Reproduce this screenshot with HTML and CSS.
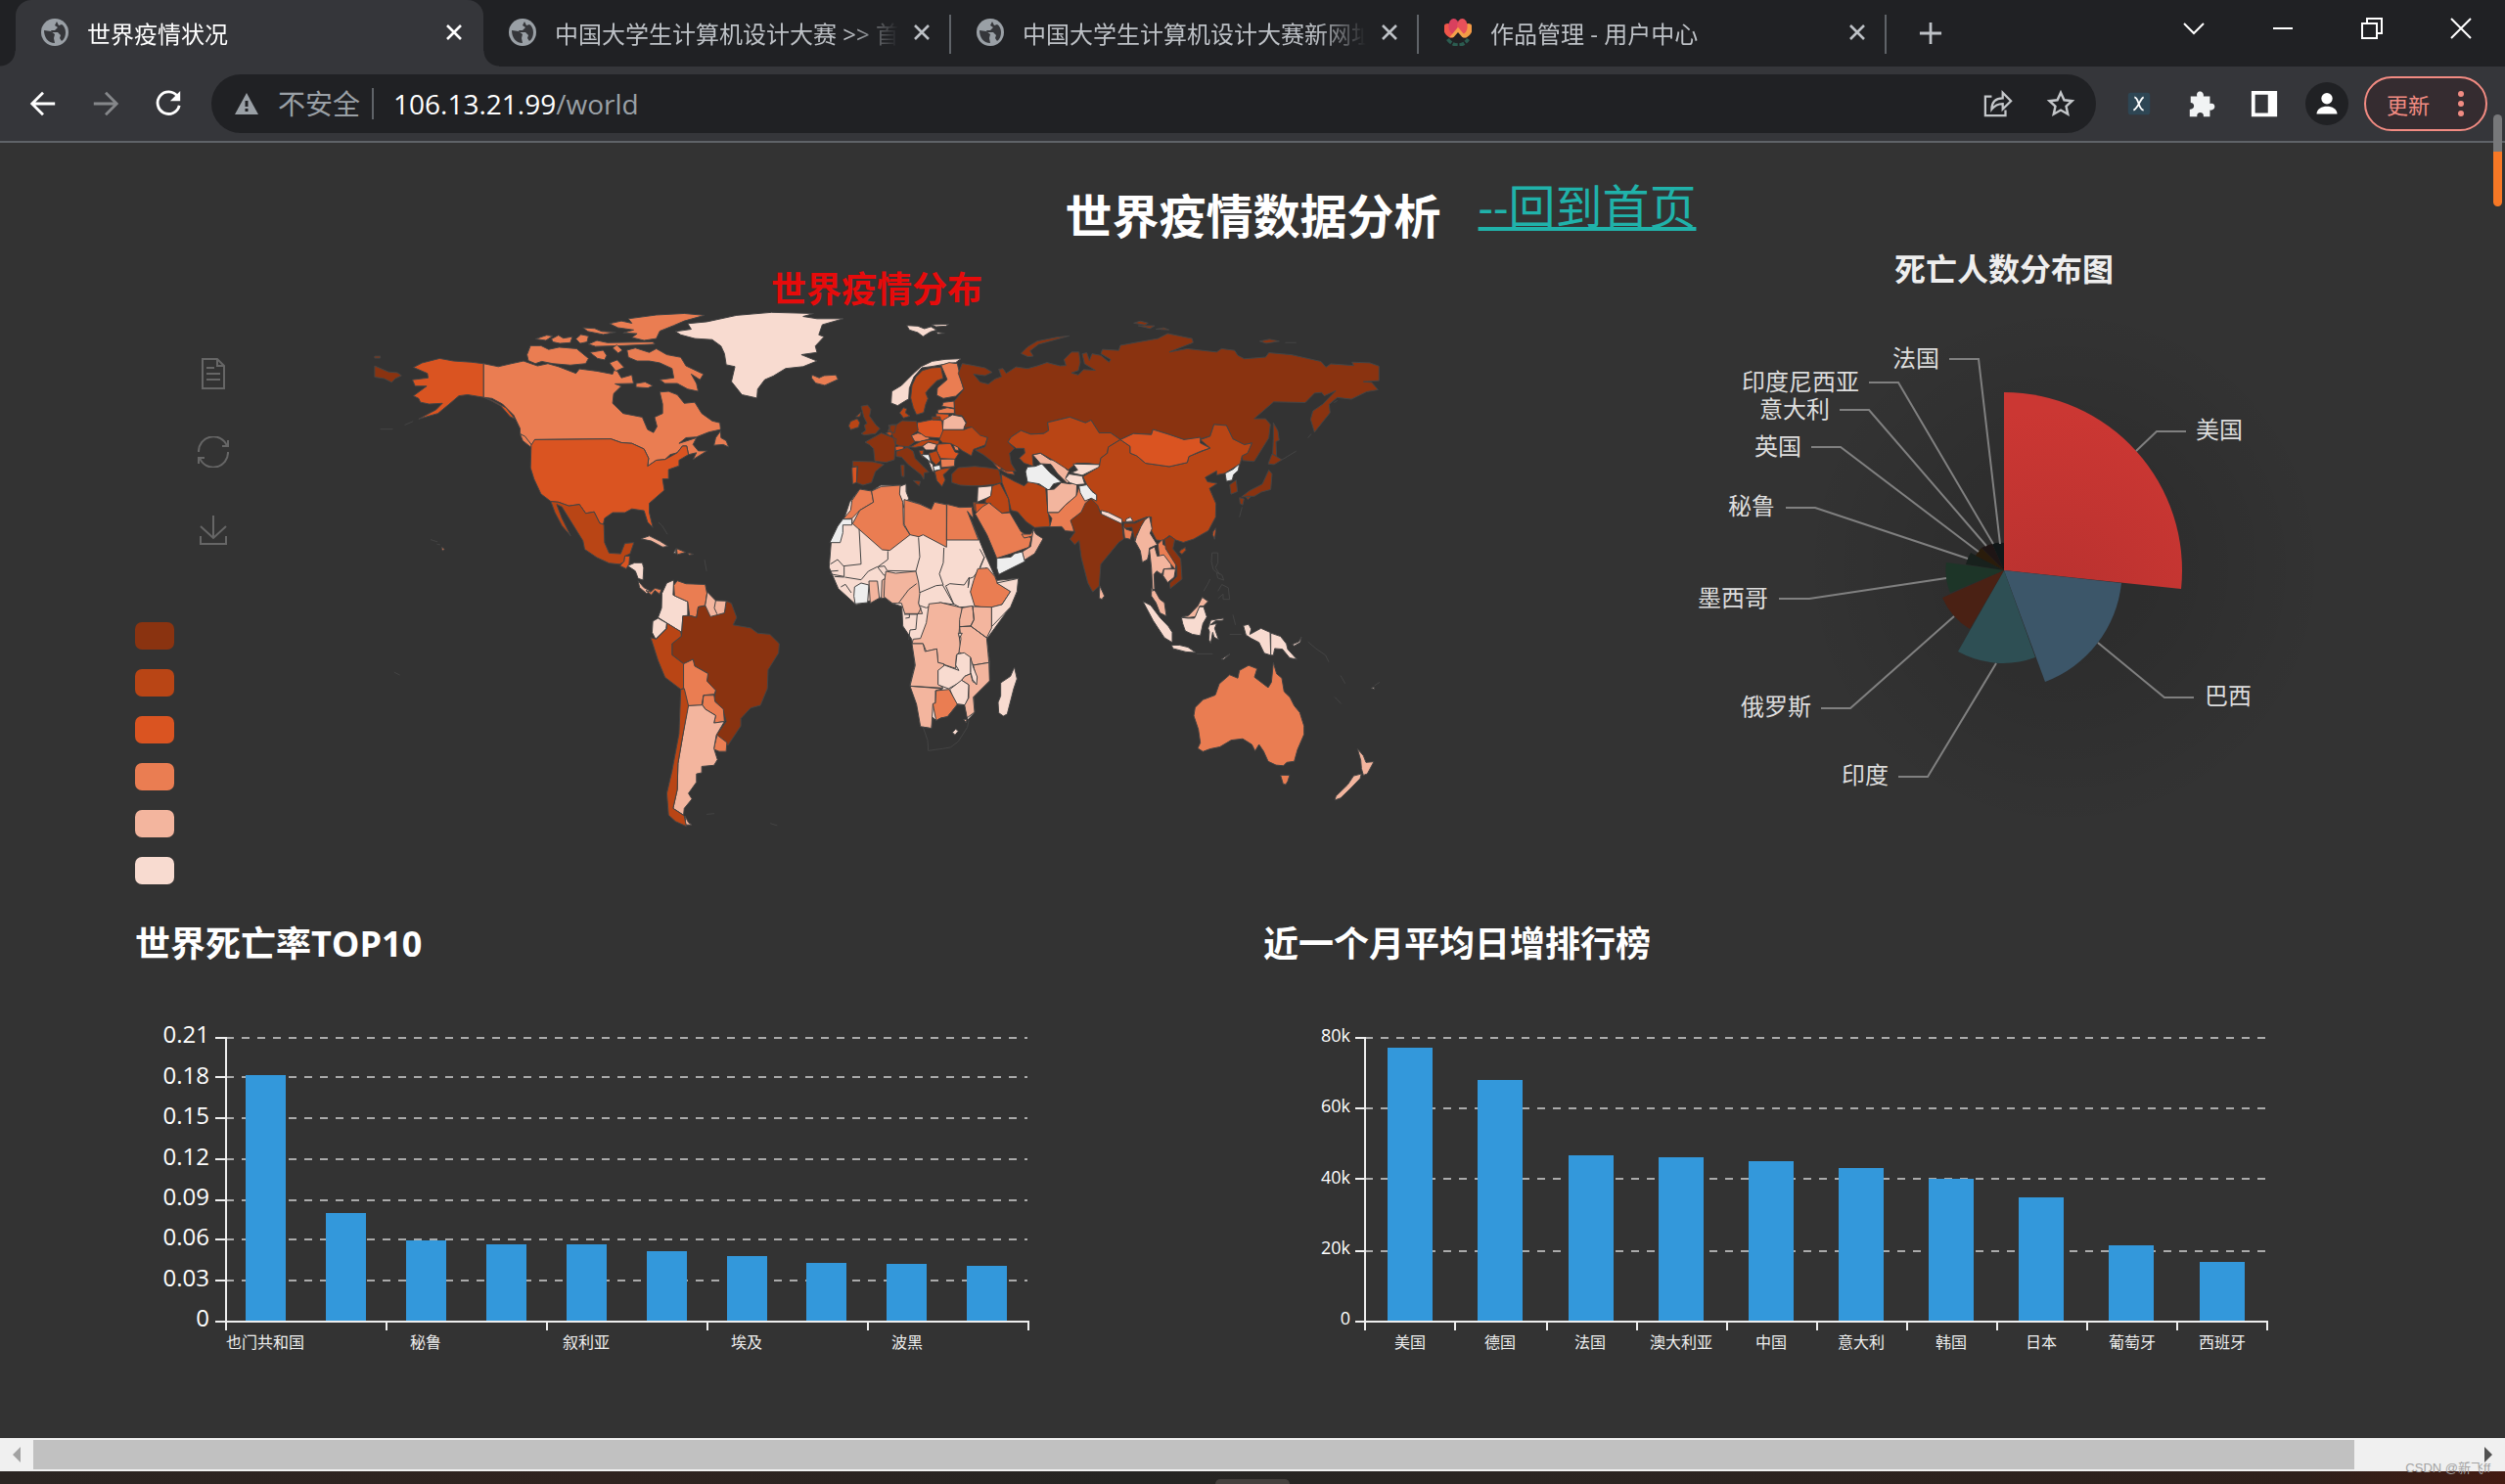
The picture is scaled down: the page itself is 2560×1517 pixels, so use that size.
FILE: index.html
```html
<!DOCTYPE html>
<html lang="zh-CN">
<head>
<meta charset="utf-8">
<title>世界疫情状况</title>
<link rel="stylesheet" href="styles.css">
</head>
<body>
<svg class="defs" aria-hidden="true">
  <symbol id="globe" viewBox="0 0 28 28"><circle cx="14" cy="14" r="14" fill="#9aa0a6"/><path d="M3 12l7 1 4 3-1 4 1 5C7 25 3 19 3 12zM16 3l-2 4 3 2-3 3h-4l1 2 6 0 3 3-1 3 2 3c3-2 4-6 4-9 0-4-2-7-4-8l-3 1z" fill="#35363a"/></symbol>
  <symbol id="cross" viewBox="0 0 24 24"><path d="M5 5l14 14M19 5L5 19" stroke="currentColor" stroke-width="2.6" fill="none"/></symbol>
</svg>

<div class="tabs">
  <div class="tab active">
    <svg class="fav"><use href="#globe"/></svg><span class="name">世界疫情状况</span>
    <button class="x" aria-label="关闭"><svg><use href="#cross"/></svg></button>
  </div>
  <div class="tab">
    <svg class="fav"><use href="#globe"/></svg><span class="name">中国大学生计算机设计大赛 &gt;&gt; 首页</span>
    <button class="x" aria-label="关闭"><svg><use href="#cross"/></svg></button>
  </div>
  <div class="tab">
    <svg class="fav"><use href="#globe"/></svg><span class="name">中国大学生计算机设计大赛新网址</span>
    <button class="x" aria-label="关闭"><svg><use href="#cross"/></svg></button>
  </div>
  <div class="tab">
    <svg class="fav" viewBox="0 0 32 32"><ellipse cx="6" cy="14" rx="6" ry="9" fill="#f0554a" transform="rotate(-30 6 14)"/><ellipse cx="26" cy="14" rx="6" ry="9" fill="#f49a45" transform="rotate(30 26 14)"/><ellipse cx="11" cy="9" rx="6" ry="9" fill="#d9405e"/><ellipse cx="21" cy="9" rx="6" ry="9" fill="#e8505a"/><path d="M6 22l10-12 10 12" fill="#f4a04a"/><path d="M4 24q5 7 12 7t12-7" fill="none" stroke="#2b5c50" stroke-width="4" stroke-dasharray="6 2"/><path d="M9 24l7-8 7 8z" fill="#241f22"/></svg><span class="name">作品管理 - 用户中心</span>
    <button class="x" aria-label="关闭"><svg><use href="#cross"/></svg></button>
  </div>
  <button class="plus" aria-label="新标签页"><svg viewBox="0 0 26 26"><path d="M13 1v24M1 13h24" stroke="#bdc1c6" stroke-width="3"/></svg></button>
  <div class="win">
    <button aria-label="搜索标签页"><svg viewBox="0 0 24 24"><path d="M2 7l10 10L22 7"/></svg></button>
    <button aria-label="最小化"><svg viewBox="0 0 24 24"><path d="M2 12h20"/></svg></button>
    <button aria-label="还原"><svg viewBox="0 0 24 24"><path d="M2 7h15v15H2zM7 7V2h15v15h-5"/></svg></button>
    <button aria-label="关闭窗口"><svg viewBox="0 0 24 24"><path d="M2 2l20 20M22 2L2 22"/></svg></button>
  </div>
</div>

<div class="bar">
  <button aria-label="后退"><svg viewBox="0 0 32 32" stroke="#fff"><path d="M29 16H5M16 4L4 16l12 12"/></svg></button>
  <button aria-label="前进"><svg viewBox="0 0 32 32" stroke="#85878a"><path d="M3 16h24M16 4l12 12-12 12"/></svg></button>
  <button aria-label="刷新"><svg viewBox="0 0 32 32" stroke="#fff"><path d="M26 8A12 12 0 1 0 28 18"/><path d="M29 2v11H18z" fill="#fff" stroke="none"/></svg></button>
  <div class="omni">
    <svg class="warn" viewBox="0 0 24 22"><path d="M12 0l12 22H0z" fill="#9aa0a6"/><path d="M12 8v6M12 16v3" stroke="#202124" stroke-width="3"/></svg>
    <span class="unsafe">不安全</span>
    <span class="url"><b>106.13.21.99</b>/world</span>
    <button aria-label="分享"><svg viewBox="0 0 32 32" stroke="#c4c7ca"><path d="M9 8H2v21h22v-6M9 22c0-8 4-12 12-12V4l9 9-9 9v-6c-6 0-9 2-12 6z" stroke-width="2.4"/></svg></button>
    <button aria-label="收藏"><svg viewBox="0 0 32 32" stroke="#c4c7ca"><path d="M16 4l3.700 8 8.600 1-6.400 5.800 1.800 8.600L16 23l-7.700 4.400 1.800-8.600L3.700 13l8.600-1z" stroke-width="2.600"/></svg></button>
  </div>
  <div class="ext">
    <button aria-label="扩展 X"><svg viewBox="0 0 32 32"><rect x="4" y="4" width="24" height="24" rx="3" fill="#2e4654"/><path d="M11 9c5 0 4 14 10 14M21 9c-4 2-6 12-11 14" stroke="#fff" stroke-width="2"/></svg></button>
    <button aria-label="扩展程序"><svg viewBox="0 0 32 32"><path d="M4 8h7c-2-7 8-7 7 0h7v8c7-2 7 8 0 7v7h-7c1-6-8-6-7 0H3v-8c6 1 6-7 1-7z" fill="#f1f3f4"/></svg></button>
    <button aria-label="侧边栏"><svg viewBox="0 0 32 32"><path d="M2 2h28v28H2zM6 6v20h14V6z" fill="#fff" fill-rule="evenodd"/></svg></button>
    <button class="me" aria-label="用户"><svg viewBox="0 0 32 32"><circle cx="16" cy="10" r="6.500" fill="#fff"/><path d="M4 28c0-12 24-12 24 0z" fill="#fff"/></svg></button>
    <button class="update">更新<svg viewBox="0 0 8 28"><circle cx="4" cy="4" r="3"/><circle cx="4" cy="14" r="3"/><circle cx="4" cy="24" r="3"/></svg></button>
  </div>
</div>
<div class="thumb-v"></div>

<main>
  <header class="head"><h1>世界疫情数据分析</h1><a href="/">--回到首页</a></header>

  <section class="top">
    <aside>
      <div class="tools">
        <button aria-label="数据视图"><svg viewBox="0 0 32 32"><path d="M5 1h15l7 7v23H5zM20 1v7h7M9 10h8M9 16h14M9 22h14"/></svg></button>
        <button aria-label="还原"><svg viewBox="0 0 32 32"><path d="M1 16A15 15 0 0 1 30 10M31 4v6h-6M31 16A15 15 0 0 1 2 22M1 28v-6h6"/></svg></button>
        <button aria-label="保存为图片"><svg viewBox="0 0 32 32"><path d="M16 1v23M3 12l13 12 13-12M3 22v8h26v-8"/></svg></button>
      </div>
      <ul class="legend"><li class="s1"></li><li class="s2"></li><li class="s3"></li><li class="s4"></li><li class="s5"></li><li class="s6"></li></ul>
    </aside>

    <div class="map">
      <h2>世界疫情分布</h2>
      <svg viewBox="372 314 1048 536" role="img" aria-label="世界疫情分布">
        <!-- Americas -->
        <g transform="translate(360 260) scale(.35714 .38265)">
          <path class="c1" d="M64 298l20 8 20 8 25 2 12 8-18 8-10 10-22-10-27-4zM64 272h16v5h-16z"/>
          <path class="c3" d="M376 292L340 288 290 285 250 278 200 290 175 302 215 318 217 330 172 335 180 352 213 352 175 378 190 385 195 395 220 400 258 398 240 415 190 440 245 425 275 402 305 378 330 375 376 382 400 390 440 410 466 440 452 434 425 405 395 390 376 382z"/>
          <path class="c4" d="M376 292L418 300 455 292 490 285 530 298 560 292 590 300 640 318 650 306 700 312 745 320 752 302 770 330 800 322 805 345 752 346 770 352 748 372 745 398 775 425 830 435 845 468 862 476 872 460 865 435 888 425 888 400 880 368 905 366 930 375 950 398 980 395 1000 425 1030 445 1052 450 1054 468 1020 475 985 488 955 490 935 505 985 490 975 508 990 525 1015 525 975 548 985 530 962 535 957 512 945 512 930 530 910 535 895 548 870 550 845 566 848 545 835 520 800 505 770 503 740 493 522 495 522 515 500 500 480 478 480 465 462 430 430 400 400 385 376 382z"/>
          <path class="c4" d="M1035 510L1040 490 1054 472 1055 490 1070 498 1077 515 1062 508zM480 480l14 6 20 24-2 6-24-18zM500 268l10-24 30 0 22 10 30-6 50 4 34 26-8 14-44 4-50-4-32-6-18 6-20-8zM680 262l38-6 10 14-6 12-20-4zM736 290l22-8 20 20-24 10zM524 226l32-10 18 2-20 12zM570 226l20-10 14 8 26-4-6 16-30 2-20-4zM640 226l14-12 22 4-4 16-20 4zM676 240l24-10 30 6 130-2 6 6-90 4-80 2zM660 196l34 2 20 8 40 2-36 6-44-8z"/>
          <path class="c4" d="M736 185L770 178 800 184 790 172 870 162 950 158 1008 163 950 178 920 190 880 205 870 225 835 230 800 222 815 212 775 210 805 202 760 196z"/>
          <path class="c4" d="M786 256L810 250 850 262 870 252 900 268 940 275 955 298 1005 320 995 335 970 320 985 345 990 366 960 360 930 345 895 345 880 335 920 330 915 305 880 290 850 285 815 285 790 275zM812 345l26-4 22 10-14 6-34-2zM745 250l12-8 16 14-12 8z"/>
          <path class="c3" d="M522 495L740 493 770 503 800 505 835 520 848 545 845 566 870 550 895 548 930 530 945 512 957 512 962 535 935 550 935 565 905 575 905 600 888 600 893 630 850 665 850 690 860 730 845 715 835 685 800 680 780 690 745 690 722 705 718 722 708 718 692 688 668 692 650 668 620 672 590 662 568 660 540 640 520 600 510 570 512 510z"/>
          <path class="c2" d="M568 660L590 662 620 672 650 668 668 692 692 688 708 718 720 722 722 770 735 798 768 800 780 772 806 770 795 800 780 806 778 822 765 828 735 825 700 810 665 788 660 765 630 720 600 675 585 668 600 705 625 752 600 725 580 690z"/>
          <path class="c3" d="M780 806h14l-2 22-8 12-18-8 12-12z"/><path class="c5" d="M826 760l24-8 30 14 24 14-16 2-32-16zM818 872l16 18 20 10-12 6-20-16z"/><path class="c4" d="M928 786l26 10-24 6zM840 898l14 4 12-10 18 4-4 12-14-10-10 12zM960 798l16 3-12 2zM256 782l8 6-6 4zM1316 322l20 8 14-6 34-2 6 12-38 16-26-6-12-14z"/>
          <path class="c6" d="M788 832l20-8h22l4 14-2 32-14-4-8-20zM926 786v14l-6-2z"/>
          <path class="c6" d="M886 906L900 878 920 870 918 910 960 928 960 965 946 966 942 1020 940 1008 900 985 875 970 885 945zM860 980L875 972 900 985 898 1000 868 1028 858 1010z"/>
          <path class="c4" d="M920 884L930 872 955 880 1010 882 1015 905 1010 938 990 942 985 970 965 965 960 928 922 912z"/>
          <path class="c1" d="M946 966L965 965 985 970 990 942 1015 938 1025 965 1065 958 1070 926 1085 932 1100 970 1090 990 1140 998 1160 1012 1195 1015 1222 1040 1220 1065 1190 1110 1188 1160 1168 1205 1140 1212 1112 1240 1112 1260 1075 1312 1042 1284 1070 1248 1060 1215 1035 1190 1040 1165 1015 1140 1018 1120 980 1100 975 1082 948 1094 915 1070 915 1040 942 1020z"/>
          <path class="c5" d="M1016 902L1040 925 1070 926 1065 958 1025 968 1010 938z"/><path class="line" d="M1040 925l-4 20 8 16"/>
          <path class="c2" d="M854 1024L870 1028 900 1000 900 985 940 1008 942 1020 915 1040 915 1070 948 1094 950 1160 940 1162 895 1130 875 1085z"/>
          <path class="c4" d="M948 1094L975 1082 980 1100 1018 1120 1015 1140 1040 1165 1035 1178 1005 1178 1000 1205 960 1206 948 1160zM1002 1204L1005 1178 1035 1175 1038 1195 1062 1215 1065 1248 1035 1252 1040 1232 1010 1215zM1044 1284l28 20-2 24-20 0-16-6z"/>
          <path class="c5" d="M960 1206L1002 1204 1010 1215 1040 1232 1035 1252 1065 1248 1042 1284 1035 1320 1045 1350 1035 1365 1000 1368 1000 1385 985 1388 985 1410 962 1440 972 1455 950 1480 948 1498 918 1480 930 1430 932 1360 945 1290zM952 1500l10 18 10 6h-18z"/>
          <path class="c2" d="M940 1162L950 1160 962 1206 945 1290 932 1360 930 1430 918 1480 950 1500 956 1528 925 1515 905 1498 900 1440 915 1380 935 1280z"/>
          <path class="c6" d="M925 206L970 200 960 185 1015 180 1100 163 1200 155 1320 158 1290 166 1330 172 1405 172 1345 188 1335 215 1350 220 1325 245 1330 262 1285 268 1330 285 1290 300 1240 305 1205 325 1180 335 1160 360 1158 384 1115 375 1085 340 1095 300 1070 295 1065 265 1055 245 1030 228 980 225 940 215z"/>
          <path class="isle" d="M80 467h36M150 456l24-10M224 762l20 6M242 774l10 2M1014 1496l22-2M1196 1520l20 6M876 716l10 8 16 24M1008 816l6 30M120 1116l16 8"/>
        </g>
        <!-- Europe and Africa -->
        <g transform="translate(820 300) scale(.33333)">
          <path class="c6" d="M176 600L212 606 240 588 300 588 318 590 320 632 360 645 395 662 405 640 445 648 480 656 520 655 524 690 506 668 540 750 560 800 596 880 662 874 655 920 620 985 565 1060 574 1130 572 1190 525 1235 528 1285 505 1310 496 1262 470 1262 410 1310 395 1333 370 1328 345 1240 330 1200 345 1140 335 1060 308 1020 305 960 275 950 250 930 165 955 110 905 82 840 88 765 125 700 145 640z"/>
          <path class="c6" d="M320 98l34 2 20 8 20-6 18 10-20 6-22 14-16-12-26-8zM396 96l54-2-10 6-30 2zM408 118l28 4-20 2z"/>
          <path class="c6" d="M274 300l30-18 20-20 16-16 24-22 34-16 40-6 48-2-16 12-40 6-34 6-30 4-24 28-14 34-2 34-8 4-26 16-20-8z"/>
          <path class="c2" d="M332 320L336 282 348 256 368 236 396 228 425 226 432 260 412 268 390 290 378 305 385 322 378 340 372 365 350 372 340 350zM298 366l12-16 10 4-4 12 14 10-20 6zM180 364l-4 14-12 0z"/>
          <path class="c4" d="M432 236L425 220 450 212 475 215 482 245 494 293 470 315 432 322 412 312 414 290 444 264z"/>
          <path class="c4" d="M432 334l34-4v22l-38-6zM414 358l30-8 22 4v14l-50 0zM334 436l20-8 30 6 6 12-24 8-24 0zM424 508l44-2-2 24-40 4zM460 458l16 4 4 20-12-2z"/>
          <path class="c3" d="M352 396l50-10 26 4 4 36-6 18-48-4-26-18zM410 368l38 2 4 14-20 8-22-12zM414 462l40-2 14 26 12 4-12 18-44-2-12-22zM152 534l16-4-2 50-12 4zM284 470l24-4 4 12-26 4z"/>
          <path class="c5" d="M430 418l2-30 28-16 30 6 12 20-8 20zM368 468l18-12h30l-12 24-26 0z"/>
          <path class="c2" d="M420 448L432 418 495 418 520 408 548 432 568 442 560 465 525 478 518 498 490 482 478 472 454 460 430 458zM148 392l20-8 8 12-4 14-24 8-6-12zM256 428l20-8 6 12-14 4zM308 478l28-10 30-16 26-4 28 4-4 12-30-8-18 12-22 4-26-2zM358 482l14-2-2 24-8-10zM388 490l24-8 12 30-14 14-14-14zM406 546l20-8 28-4-10 12-12 10 6 16-10 20-16-18z"/>
          <path class="c1" d="M180 346l20-4 10 14-4 20 20 28 12 10-14 16-34 4-10-4 14-10-4-16 8-6-10-20zM192 456l50-28 46 18-4 28-2 36-26 8-34-4-4-38-12-12zM154 514l62 2 34 8-26 22-12 34-26 8-20-8 4-50-16 2zM264 404L286 404 306 390 350 392 355 420 334 436 345 455 325 470 300 468 285 462 280 445zM262 422l10-20 16 0-6 26zM288 484l34-12 18 12 6 22 24 24 18 18-14 2-2 20-8-14-40-32-20-22-16-2zM302 526h10v36l-8-2zM340 574l22 2-4 14zM458 554l20-20 50-4 40 4 34 6 10 40-24 6-40 4-32 0-32-2-26-8zM692 194l-22-10 20-20 30-18 60-12 38-4-50 14-44 12-26 20 10 16zM396 378l26 0 2 8-24 2z"/>
          <path class="no" d="M364 494h24l6 24zM400 530l22-4 2 14-20 4z"/><path class="c6" d="M386 514l14 10 4 24-6-4zM298 592l20-8 0 24 8 20-14 30-8-26-8-18z"/>
          <path class="c4" d="M176 600L212 606 218 640 176 665 152 690 125 692 148 665 152 635z"/>
          <path class="c4" d="M212 606L242 592 300 588 298 615 308 640 310 710 330 740 268 788 245 786 154 706 176 665 218 640zM312 632L360 646 395 662 405 640 443 648 442 778 370 740 357 746 330 740 312 708zM442 646L482 656 520 655 524 690 506 668 540 756 442 756z"/>
          <path class="no" d="M124 692h28v18h-28l0 24-8 30-32 0 24-50z"/>
          <path class="line" d="M152 706l0-14M174 722l6 108-54 6M262 790v26l-30 22M356 748l4 60-12 44-88-2-8-14-20 2M434 780l-2 46-12 34 12 34M544 840l14-32M544 784l14 26-14 34-20 26-12 4-4 28 4-32-16 24-44-4-14 8M358 918l52-22 20-2 34 60-42-6-42 16-24-8v-38M130 870l50 8 22-26 28-14 20 26 14 0M86 830l22-14 20 22 0 30-44-8M98 868l30 2M118 900l14-8 18 26M86 852l24-2M440 898l24 54 18 10 40-2M562 840l24 34 22 26 30 16"/>
          <path class="no" d="M160 900l20-12 24 6-4 54-38 4-4-24z"/>
          <path class="c5" d="M204 882h26l6 52-28 16zM244 880l10-6 0 58-12 4z"/>
          <path class="c5" d="M256 852L286 858 348 852 356 885 360 920 356 950 368 982 314 982 304 950 276 950 250 930 252 880z"/><path class="line" d="M350 890l-24 18-30 40"/>
          <path class="line" d="M312 984h42l10-20M326 1062l4-30 18-2 4-46M316 996l12-2v-12"/>
          <path class="c4" d="M538 844L568 842 590 868 598 888 638 914 612 954 570 966 528 958 515 915 525 880z"/>
          <path class="c6" d="M596 888L662 874 658 914 638 962 580 1022 580 962 612 954 638 914z"/>
          <path class="c5" d="M388 952L424 948 490 964 482 1020 480 1045 486 1095 472 1110 470 1150 416 1132 412 1090 380 1098 370 1074 336 1074 340 1060 362 1058 380 1010z"/>
          <path class="c5" d="M490 964L522 958 526 1000 516 1020 482 1022 482 1000zM522 960L580 962 580 1026 565 1056 516 1020 526 1000zM482 1022L516 1020 565 1056 572 1132 524 1140 510 1115 480 1100 486 1060z"/>
          <path class="c5" d="M336 1074L370 1074 376 1098 412 1090 416 1132 434 1136 432 1154 416 1156 416 1196 432 1210 366 1206 330 1204 346 1140zM330 1204L430 1212 408 1218 408 1256 400 1260 396 1334 362 1328 350 1260z"/>
          <path class="c6" d="M474 1106L496 1102 516 1116 516 1166 498 1174 484 1192 448 1212 416 1200 416 1156 436 1140 480 1156 470 1140z"/><path class="c5" d="M524 1140L572 1132 574 1188 524 1238 528 1284 504 1302 496 1262 510 1240 510 1200 488 1186 498 1174 516 1166 522 1190 532 1196 530 1166z"/>
          <path class="c6" d="M516 1118l8 28 12 30-2 24-12-16-6-22zM452 1214l36-28 22 14-2 42-10 20-28-4z"/>
          <path class="c4" d="M410 1218L450 1214 475 1260 445 1298 425 1302 410 1310 400 1258 408 1256z"/>
          <path class="sa" d="M370 1330L396 1334 400 1300 410 1310 425 1302 445 1298 475 1262 497 1262 505 1302 510 1310 506 1330 478 1374 454 1392 430 1396 386 1402 384 1370z"/>
          <path class="c6" d="M460 1346l10-10 8 6-10 12zM478 1042l12 0-8 14zM650 1146l8 36-10 30-20 78-12 6-14-10-2-32 8-20 0-40 30-20z"/>
          <path class="c5" d="M494 1306l10 0-2 10z"/>
          <!-- Middle East -->
          <path class="c6" d="M538 594l44-4-4 32-42 18z"/>
          <path class="c2" d="M582 590L606 582 632 630 636 670 612 674 560 640 562 632 578 620zM610 554L650 576 680 590 696 574 746 596 750 640 760 715 712 718 686 700 660 670 640 665 632 630 612 580zM524 640h14l10 12-14 20-8-10z"/>
          <path class="c3" d="M530 644l48 0-20 12-18 18-8 0zM584 518l34 10 4 12-20 0zM606 540l36-6 8 22-22-4z"/>
          <path class="c4" d="M530 676L552 654 572 642 612 674 636 672 670 730 702 750 695 778 640 798 596 812 566 740z"/>
          <path class="c4" d="M672 738l28 0 10-16-4 22-26 6z"/>
          <path class="c5" d="M708 724L716 738 738 752 712 798 680 818 674 792 700 776 704 748z"/>
          <path class="no" d="M596 812l44-4 10-10 24-6 8 30-80 40-6-20z"/>
          <path class="no" d="M684 546l6-14 24-2 20-8 24 26 36 30-24 6-14 20-30-20-36-6z"/>
          <path class="c5" d="M706 494l24-4 30 20 30 0 20 30 8 4-10 20 20 6-16 12-30-30-20-28-32-2z"/>
          <path class="c5" d="M750 602L772 600 794 580 820 584 842 580 840 622 805 650 785 672 752 672z"/>
          <path class="c4" d="M752 672L785 672 805 650 840 620 850 588 868 600 880 628 868 670 830 690 832 730 806 728 795 715 758 716 765 690z"/>
        </g>
        <!-- Asia and Oceania -->
        <g transform="translate(1080 260) scale(.33333 .34439)">
          <path class="c1" d="M-290 324L-260 329-220 337-198 350-220 360-255 356-235 379-210 385-190 370-170 363-178 341-165 339-155 353-125 334-90 339-60 331-30 321 10 331 28 330 22 312 45 290 68 290 72 320 66 345 45 352 66 358 82 342 118 344 85 325 78 295 92 292 100 315 108 295 135 300 160 320 165 312 135 295 140 282 190 285 195 270 240 262 310 250 340 235 415 250 418 262 345 290 400 280 490 290 505 280 545 285 555 300 575 310 640 305 650 292 720 298 810 318 825 335 840 325 910 330 905 320 960 322 988 332 988 375 940 378 965 380 985 402 950 408 903 430 860 425 835 445 838 470 790 528 778 490 785 465 815 445 855 405 820 420 812 410 790 412 762 440 665 438 605 488 640 488 655 505 650 545 605 615 570 612 568 598 585 590 598 560 575 565 540 548 520 508 482 505 470 540 440 548 390 550 345 535 295 520 290 535 235 532 195 550 165 530 130 530 105 492 88 500 40 483 10 490-28 499-25 523-40 532-80 534-110 523-140 542-150 557-130 576-145 590-140 620-125 644-155 644-190 621-225 595-250 581-220 571-212 544-235 537-260 513-285 515-277 499-290 479-312 476-315 436-308 428-285 400-302 353z"/>
          <path class="c1" d="M236 204l20-6 24 6-10 6zM250 212l50 0-14 8zM304 222l24-4 16 6zM622 258l30-6 30 6-40 6zM700 262h34M664 500l14 24 4 28-10 4 2 44-12-8 2-44z"/>
          <path class="c2" d="M195 550L158 572 155 590 135 605 132 625 95 620 60 620 35 640-5 615-50 590-75 595-72 629-100 620-115 605-98 590-100 576-125 576-150 557-140 542-110 523-80 534-40 532-25 523-28 499 10 490 40 483 88 500 105 492 130 530 165 530z"/>
          <path class="c2" d="M195 550L225 570 225 590 245 598 272 620 345 630 400 618 405 600 470 575 440 550 470 540 482 505 520 508 540 548 575 565 598 560 585 590 568 598 562 622 515 650 490 655 490 643 455 662 462 675 492 680 468 695 488 740 487 780 465 820 420 845 388 855 365 848 345 835 325 850 305 848 290 820 290 780 275 780 235 795 200 795 135 765 105 725 122 715 95 690 80 660 130 630 135 605 155 590 158 572zM380 878l14-8 2 8-12 12-8-6z"/>
          <path class="c3" d="M195 550L235 532 290 535 295 520 345 535 390 550 440 543 440 560 470 575 440 585 405 600 400 618 345 630 272 620 245 598 225 590 225 570zM480 822l8-10-4 34-6-14z"/>
          <path class="c6" d="M50 622l82 2-4 8-50 24-34-8 20-8zM26 666l12-14 40 6 8 24-26 2-20-6zM136 760l22 6 42 20 0 14-30-6-34-20zM212 786l14-6 8 12-22 2z"/>
          <path class="no" d="M68 688l24-4 16 20 14 10 0 18-16-8-20 8-14-24zM516 650l24-12 20-16-4 20-14 12-4 16-18 4z"/>
          <path class="c1" d="M105 725L125 745 135 770 200 800 205 845 190 855 135 920 130 985 110 1002 95 975 75 900 68 850 55 862 40 845 55 825 42 790 75 765 88 738zM205 798l35 0 38-18-4 20-28 30-6 22-10-42-24 4z"/>
          <path class="c1" d="M530 684l20-14 4 34-20 8zM660 592l30 18-24 14-18-2zM650 640l10 12-4 46-30 8-20 12-40 2 24-18 40-20zM560 722l14 4-4 18-8-4zM578 718l18 0-10 10z"/>
          <path class="c4" d="M204 806l8 10 20 6-6 24-18-4zM310 860l14-14 2 16 16 4 4 20 20 30-2 20-18-20-12-14-20-6z"/>
          <path class="c1" d="M330 846l18-10 14 10-6 28 24 30 4 60-36 28-2-16 22-20 0-30-34-52z"/>
          <path class="c5" d="M284 778L292 814 286 828 308 862 284 872 282 890 278 906 262 914 256 880 240 852 244 838 258 808 270 788zM284 876L300 868 308 896 328 892 350 920 352 932 328 934 322 950 306 940 298 950 300 992 294 1000 290 930zM328 934h36l-4 24-20 16-14-20zM290 990l12 10 14 24 14 10 6 40-20-10-12-30-14-20zM132 984l14 30-8 10-8-4z"/>
          <path class="c6" d="M264 1030L288 1042 318 1080 342 1104 354 1122V1152L330 1138 296 1088zM352 1160l24 0 26 6 24 16-30-2-40-10zM382 1078l20 2 20 0 14-34 14 0 10 30-12 20-8 36-24-4-22-10-8-22zM472 1086l40-6-2 6-24 2-16 12 20-4-6 14 12 34-14-8-4-14-6 32-6-10 2-24-4-10zM572 1102l16-4 8 14-4 16 34-18 28 12 2 68-20-6-16-32-24-12-16-10z"/>
          <path class="c6" d="M656 1124L686 1134 704 1156 708 1172 736 1202 714 1198 692 1172 668 1170 664 1190 656 1190zM722 1158l20-8 8-14-4 16-18 10zM505 1202l26-16-18 16zM530 1128h36M428 1186h50M964 1288l8-4 2 6z"/>
          <path class="c5" d="M384 1076L404 1072 432 1044 446 1018 464 1030 450 1044 438 1044 424 1076 404 1078zM922 1468l18 20 8 20 24-2-20 36-12 4-6-20-2-24zM934 1542l-4 14-30 30-30 28-18 6 4-12 36-34 18-26zM852 1314l20 20"/>
          <path class="c4" d="M664 1212L674 1245 690 1258 697 1298 715 1315 728 1340 745 1360 758 1400 758 1425 738 1470 728 1505 705 1508 695 1518 672 1516 648 1505 634 1475 620 1455 608 1474 598 1455 570 1438 535 1442 500 1462 470 1468 448 1476 432 1466 440 1450 434 1410 420 1370 424 1345 448 1322 486 1308 498 1275 530 1248 555 1258 560 1235 588 1220 614 1230 606 1255 648 1286 658 1270zM686 1546h28l-6 18-6 10-8-2z"/>
          <path class="isle" d="M450 1000l12-20 8-16M476 886h18l0 30-8 14 14 20-20-14-6-24zM490 945l16 6 6 16-18-6zM494 1000l12-20 20 10 4 34-20 0 0-16-16 14M690 610l44-26M770 1150l24 20 30 20 10 20M870 1250l14 24M974 1280l16-10M850 440l10-6M770 545l10-12M540 1070l8 30M560 780l8-30"/>
        </g>
      </svg>
    </div>

    <div class="pie">
      <h2>死亡人数分布图</h2>
      <svg viewBox="1536 295 1024 560" role="img" aria-label="死亡人数分布图">
        <defs><radialGradient id="shade"><stop offset="0" stop-opacity=".16"/><stop offset=".5" stop-opacity=".09"/><stop offset="1" stop-opacity="0"/></radialGradient>
        <radialGradient id="red" gradientUnits="userSpaceOnUse" cx="2095" cy="620" r="200"><stop offset="0" stop-color="#b8312f"/><stop offset="1" stop-color="#cb3733"/></radialGradient></defs>
        <circle cx="2110" cy="580" r="270" fill="url(#shade)"/>
        <path fill="url(#red)" d="M2048 583V401A182 182 0 0 1 2229 602z"/>
        <path fill="#3c5669" d="M2048 583L2168 596A121 121 0 0 1 2090 697z"/>
        <path fill="#2e4f54" d="M2048 583L2080 672A95 95 0 0 1 2001 666z"/>
        <path fill="#4a2114" d="M2048 583L2013 643A70 70 0 0 1 1985 611z"/>
        <path fill="#1d3528" d="M2048 583L1993 606A60 60 0 0 1 1989 575z"/>
        <path fill="#18211d" d="M2048 583L2009 577A39 39 0 0 1 2014 565z"/>
        <path fill="#2a1c0b" d="M2048 583L2019 568A33 33 0 0 1 2025 560z"/>
        <path fill="#1e1515" d="M2048 583L2025 560A32 32 0 0 1 2036 556z"/>
        <path fill="#111718" d="M2048 583L2036 556A28 28 0 0 1 2048 555z"/>
        <path class="lead" d="M1992 367h30L2044 556M1910 391h30L2037 556M1880 419h30L2030 558M1851 457h30L2022 564M1825 519h30L2011 571M1818 612h31L1989 591M1861 724h30L1997 630M1940 794h30L2040 678M2242 713h-30L2144 657M2234 441h-30L2183 461"/>
        <g class="lab"><text x="1934" y="375">法国</text><text x="1780" y="399">印度尼西亚</text><text x="1798" y="427">意大利</text><text x="1793" y="465">英国</text><text x="1766" y="526">秘鲁</text><text x="1735" y="620">墨西哥</text><text x="1779" y="731">俄罗斯</text><text x="1882" y="801">印度</text><text x="2253" y="720">巴西</text><text x="2244" y="448">美国</text></g>
      </svg>
    </div>
  </section>

  <section class="charts">
    <div>
      <h2>世界死亡率TOP10</h2>
      <svg viewBox="138 990 1153 400" role="img" aria-label="世界死亡率TOP10">
        <path class="grid" d="M231 1061h819M231 1101h819M231 1143h819M231 1185h819M231 1227h819M231 1267h819M231 1309h819"/>
        <path class="bars" d="M251 1351V1099h41v252zM333 1351V1240h41v111zM415 1351V1268h41v83zM497 1351V1272h41v79zM579 1351V1272h41v79zM661 1351V1279h41v72zM743 1351V1284h41v67zM824 1351V1291h41v60zM906 1351V1292h41v59zM988 1351V1294h41v57z"/>
        <path class="axis" d="M231 1060V1360M220 1351H1052M220 1061h11M220 1101h11M220 1143h11M220 1185h11M220 1227h11M220 1267h11M220 1309h11M395 1351v9M559 1351v9M723 1351v9M887 1351v9M1051 1351v9"/>
        <g class="y big"><text x="214" y="1066">0.21</text><text x="214" y="1108">0.18</text><text x="214" y="1149">0.15</text><text x="214" y="1191">0.12</text><text x="214" y="1232">0.09</text><text x="214" y="1273">0.06</text><text x="214" y="1315">0.03</text><text x="214" y="1356">0</text></g>
        <g class="xl"><text x="271" y="1378">也门共和国</text><text x="435" y="1378">秘鲁</text><text x="599" y="1378">叙利亚</text><text x="763" y="1378">埃及</text><text x="927" y="1378">波黑</text></g>
      </svg>
    </div>
    <div>
      <h2>近一个月平均日增排行榜</h2>
      <svg viewBox="1291 990 1153 400" role="img" aria-label="近一个月平均日增排行榜">
        <path class="grid" d="M1395 1061h922M1395 1133h922M1395 1205h922M1395 1279h922"/>
        <path class="bars" d="M1418 1351V1071h46v280zM1510 1351V1104h46v247zM1603 1351V1181h46v170zM1695 1351V1183h46v168zM1787 1351V1187h46v164zM1879 1351V1194h46v157zM1971 1351V1205h46v146zM2063 1351V1224h46v127zM2155 1351V1273h46v78zM2248 1351V1290h46v61z"/>
        <path class="axis" d="M1395 1060V1360M1385 1351H2318M1385 1061h10M1385 1133h10M1385 1205h10M1385 1279h10M1487 1351v9M1581 1351v9M1673 1351v9M1765 1351v9M1857 1351v9M1949 1351v9M2041 1351v9M2133 1351v9M2225 1351v9M2317 1351v9"/>
        <g class="y"><text x="1380" y="1065">80k</text><text x="1380" y="1137">60k</text><text x="1380" y="1210">40k</text><text x="1380" y="1282">20k</text><text x="1380" y="1354">0</text></g>
        <g class="xl"><text x="1441" y="1378">美国</text><text x="1533" y="1378">德国</text><text x="1625" y="1378">法国</text><text x="1718" y="1378">澳大利亚</text><text x="1810" y="1378">中国</text><text x="1902" y="1378">意大利</text><text x="1994" y="1378">韩国</text><text x="2086" y="1378">日本</text><text x="2179" y="1378">葡萄牙</text><text x="2271" y="1378">西班牙</text></g>
      </svg>
    </div>
  </section>
</main>

<div class="hscroll">
  <button aria-label="向左滚动"><svg viewBox="0 0 34 34"><path d="M21 9v16l-8-8z" fill="#a3a3a3"/></svg></button>
  <div class="track"><div class="thumb"></div></div>
  <button aria-label="向右滚动"><svg viewBox="0 0 34 34"><path d="M13 9v16l8-8z" fill="#505050"/></svg></button>
</div>
<div class="desk"><span></span></div>
<div class="mark">CSDN @新飞ff</div>
</body>
</html>
```
FILE: styles.css
```css
* { box-sizing: border-box; }
body { margin: 0; min-height: 100vh; display: flex; flex-direction: column; position: relative; background: #333; color: #fff; font-family: "Open Sans", "Noto Sans CJK SC", sans-serif; overflow: hidden; }
button { border: 0; padding: 0; background: none; color: inherit; font: inherit; display: flex; align-items: center; justify-content: center; }
h1, h2, ul { margin: 0; padding: 0; }
svg { display: block; }
.defs { position: absolute; width: 0; height: 0; }

.tabs { display: flex; height: 68px; padding-left: 16px; background: #202124; }
.tab { position: relative; width: 478px; display: flex; align-items: center; padding: 0 18px 2px 26px; color: #bdc1c6; font-size: 24px; }
.tab:not(.active)::after { content: ""; position: absolute; right: 0; top: 15px; width: 2px; height: 40px; background: #5f6368; }
.tab.active { background: #35363a; color: #fff; border-radius: 16px 16px 0 0; }
.tab.active::before, .tab.active::after { content: ""; position: absolute; bottom: 0; width: 16px; height: 16px; }
.tab.active::before { left: -16px; background: radial-gradient(circle at 0 0, transparent 15px, #35363a 16px); }
.tab.active::after { right: -16px; background: radial-gradient(circle at 100% 0, transparent 15px, #35363a 16px); }
.fav { width: 28px; height: 28px; margin-right: 19px; flex: none; }
.name { flex: 1; margin-right: 12px; white-space: nowrap; overflow: hidden; -webkit-mask-image: linear-gradient(90deg, #000 calc(100% - 50px), transparent); mask-image: linear-gradient(90deg, #000 calc(100% - 50px), transparent); }
.x svg { width: 24px; height: 24px; }
.plus { width: 90px; }
.plus svg { width: 24px; height: 24px; }
.win { margin-left: auto; display: flex; height: 58px; }
.win button { width: 91px; }
.win svg { width: 24px; height: 24px; fill: none; stroke: #fff; stroke-width: 2; }

.bar { display: flex; align-items: center; height: 78px; padding: 0 18px 0 12px; background: #35363a; border-bottom: 2px solid #5f6368; }
.bar > button { width: 64px; height: 60px; }
.bar svg { width: 30px; height: 30px; fill: none; stroke-width: 3; }
.omni { flex: 1; display: flex; align-items: center; height: 60px; margin-left: 12px; padding: 0 4px 0 24px; border-radius: 30px; background: #202124; font-size: 28px; }
.omni .warn { width: 24px; height: 22px; margin-right: 20px; }
.unsafe { padding-right: 12px; color: #9aa0a6; border-right: 2px solid #5f6368; line-height: 32px; }
.url { flex: 1; margin-left: 20px; color: #9aa0a6; font-size: 28px; }
.url b { color: #fff; font-weight: 400; }
.omni button { width: 64px; }
.ext { display: flex; align-items: center; padding-left: 12px; }
.ext > button { width: 64px; }
.ext > .me { width: 44px; height: 44px; margin: 0 16px 0 10px; border-radius: 22px; background: #202124; }
.me svg { width: 28px; height: 28px; }
.ext > .update { width: 126px; height: 56px; gap: 28px; border: 2px solid #f28b82; border-radius: 28px; background: #352c30; color: #f28b82; font-size: 22px; }
.update svg { width: 8px; height: 28px; fill: #f28b82; }
.thumb-v { position: absolute; right: 3px; top: 117px; width: 9px; height: 94px; border-radius: 5px; background: linear-gradient(#77787a 0 38px, #f77825 38px); }

main { flex: 1; }
.head { display: flex; align-items: center; justify-content: center; padding: 41px 0 0 262px; gap: 38px; font-size: 48px; line-height: 48px; }
.head h1 { font-size: 48px; font-weight: 700; }
.head a { margin-bottom: 20px; color: #20b2aa; }
.top { display: grid; grid-template-columns: 372fr 1164fr 1024fr; padding-bottom: 36px; }
aside { padding: 111px 0 0 138px; }
.tools { display: flex; flex-direction: column; gap: 48px; margin: 0 0 78px 64px; }
.tools button { width: 32px; height: 32px; }
.tools svg { width: 32px; height: 32px; fill: none; stroke: #666; stroke-width: 2; }
.legend { list-style: none; display: flex; flex-direction: column; gap: 20px; }
.legend li { width: 40px; height: 28px; border-radius: 7px; }
.s1 { background: #8a3310; } .s2 { background: #b94515; } .s3 { background: #da5421; }
.s4 { background: #ea7d52; } .s5 { background: #f3b59e; } .s6 { background: #f8dbd0; }
.map { padding: 23px 116px 0 0; }
.map h2 { color: #e60b0b; font-size: 36px; line-height: 36px; text-align: center; }
.map svg, .pie svg, .charts svg { width: 100%; }
.map svg { overflow: visible; }
.map path { stroke: #444; stroke-width: 1px; vector-effect: non-scaling-stroke; stroke-linejoin: round; }
.c1 { fill: #8a3310; } .c2 { fill: #b94515; } .c3 { fill: #da5421; }
.c4 { fill: #ea7d52; } .c5 { fill: #f3b59e; } .c6 { fill: #f8dbd0; } .no { fill: #eee; }
.isle, .line { fill: none; }
.sa { fill: #333; }
.pie h2 { color: #eee; font-size: 32px; line-height: 40px; text-align: center; }
.lead { fill: none; stroke: #808080; stroke-width: 2; }
.lab { fill: #ddd; font-size: 24px; }

.charts { display: grid; grid-template-columns: 1fr 1fr; padding: 0 116px 0 138px; }
.charts h2 { font-size: 36px; line-height: 50px; }
.grid { stroke: #aaa; stroke-width: 2; stroke-dasharray: 8 8; }
.bars { fill: #3398db; }
.axis { stroke: #eee; stroke-width: 2; }
.y { fill: #fff; font-size: 18px; text-anchor: end; }
.y.big { font-size: 24px; }
.xl { fill: #eee; font-size: 16px; text-anchor: middle; }

.hscroll { display: flex; height: 34px; background: #f0f0f0; }
.hscroll button, .hscroll svg { width: 34px; height: 34px; }
.track { flex: 1; padding: 2px 0; }
.thumb { width: 95.2%; height: 30px; background: #c1c1c1; }
.desk { display: flex; justify-content: center; align-items: flex-end; height: 13px; background: linear-gradient(90deg, #2b2522 0%, #30231f 24%, #252523 45%, #2b2522 60%, #2e201b 92%, #431b12 100%); }
.desk span { width: 76px; height: 5px; border-radius: 5px 5px 0 0; background: #45403d; }
.mark { position: absolute; right: 15px; bottom: 7px; color: #a3a3a3; font: 13px/18px "Liberation Sans", "Noto Sans CJK SC", sans-serif; }
```
